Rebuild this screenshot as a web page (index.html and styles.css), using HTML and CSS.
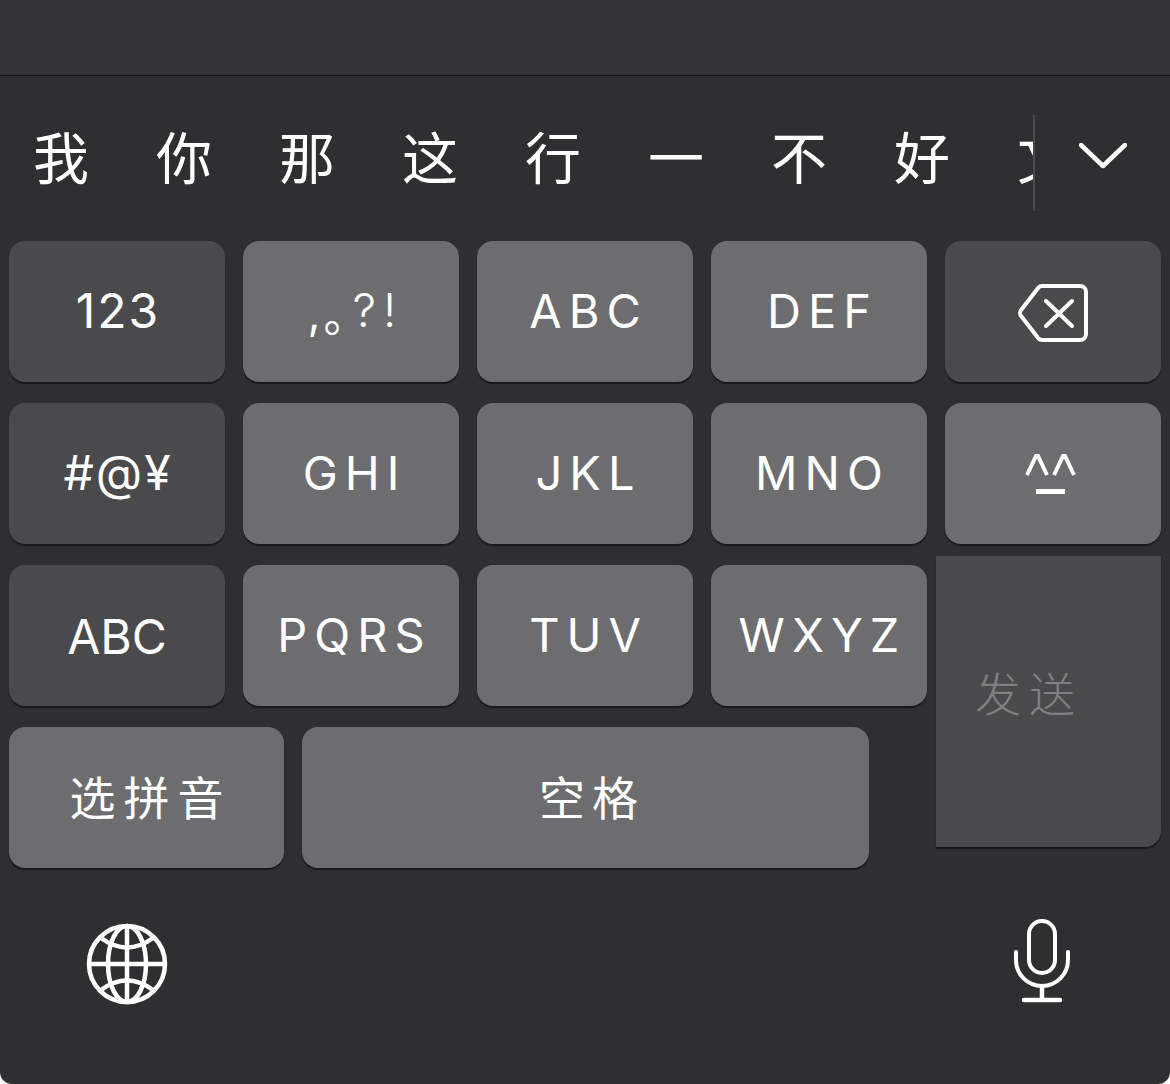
FILE: index.html
```html
<!DOCTYPE html>
<html lang="zh-CN">
<head>
    <meta charset="UTF-8">
    <meta name="viewport" content="width=device-width, initial-scale=1.0">
    <title>键盘</title>
    <link rel="stylesheet" href="styles.css">
</head>
<body>
    <div class="keyboard">
        <div class="top-bar"></div>

        <div class="candidates">
            <div class="candidate-list">
                <span>我</span><span>你</span><span>那</span><span>这</span><span>行</span><span>一</span><span>不</span><span>好</span><span>文</span>
            </div>
            <div class="candidate-more">
                <svg width="48" height="26" viewBox="0 0 48 26"><polyline points="2,2 24,23 46,2" fill="none" stroke="#fff" stroke-width="4.500" stroke-linecap="round" stroke-linejoin="round"/></svg>
            </div>
        </div>

        <div class="keys">
            <div class="key key-dark key-num">123</div>
            <div class="key key-punct">,<span class="dot">。</span><span class="marks">?!</span></div>
            <div class="key">ABC</div>
            <div class="key">DEF</div>
            <div class="key key-dark">
                <svg class="backspace" width="70" height="58" viewBox="0 0 70 58">
                    <path d="M24 2H62a6 6 0 0 1 6 6V50a6 6 0 0 1-6 6H24a5 5 0 0 1-3.500-1.500L3.500 32.500a5 5 0 0 1 0-7L20.500 3.500A5 5 0 0 1 24 2Z" fill="none" stroke="#fff" stroke-width="4" stroke-linejoin="round"/>
                    <path d="M28 17L54 42M54 17L28 42" fill="none" stroke="#fff" stroke-width="4" stroke-linecap="round"/>
                </svg>
            </div>

            <div class="key key-dark key-num">#@¥</div>
            <div class="key">GHI</div>
            <div class="key">JKL</div>
            <div class="key">MNO</div>
            <div class="key">
                <svg class="face" width="52" height="42" viewBox="0 0 52 42">
                    <path d="M2 21L11 2H13L22 21M29 21L38 2H40L49 21" fill="none" stroke="#fff" stroke-width="4"/>
                    <rect x="11" y="35" width="29" height="5" fill="#fff"/>
                </svg>
            </div>

            <div class="key key-dark key-abc">ABC</div>
            <div class="key">PQRS</div>
            <div class="key">TUV</div>
            <div class="key">WXYZ</div>
            <div class="key key-send">发送</div>

            <div class="last-row">
                <div class="key key-cn key-pinyin">选拼音</div>
                <div class="key key-cn key-space">空格</div>
            </div>
        </div>

        <div class="bottom-row">
            <svg class="globe" width="82" height="82" viewBox="0 0 82 82" fill="none" stroke="#fff" stroke-width="4.500">
                <circle cx="41" cy="41" r="38"/>
                <ellipse cx="41" cy="41" rx="19" ry="38"/>
                <path d="M41 3V79M3 41H79"/>
                <path d="M15 15Q41 34 67 15M15 67Q41 48 67 67"/>
            </svg>
            <svg class="mic" width="58" height="85" viewBox="0 0 58 85" fill="none" stroke="#fff" stroke-width="4" stroke-linecap="round">
                <rect x="16" y="3" width="26" height="52" rx="13"/>
                <path d="M3 34V42a26 26 0 0 0 52 0V34"/>
                <path d="M29 68V82M11 82H47" stroke-width="4.500"/>
            </svg>
        </div>
    </div>
</body>
</html>
```

FILE: styles.css
```css
*{
    margin: 0;
    padding: 0;
    box-sizing: border-box;
}
body{
    background-color: #fff;
    font-family: "Inter", "Noto Sans CJK SC", sans-serif;
    color: #fff;
}
.keyboard{
    width: 1170px;
    height: 1084px;
    background-color: #2f2f31;
    border-radius: 0 0 12px 12px;
    overflow: hidden;
}
.top-bar{
    height: 76px;
    background-color: #333335;
    border-bottom: 1px solid #141416;
}
/* Candidate bar */
.candidates{
    height: 165px;
    display: flex;
    padding-top: 39px;
}
.candidate-list{
    width: 1035px;
    height: 96px;
    padding: 2px 0 0 33px;
    display: flex;
    gap: 67px;
    align-items: flex-start;
    overflow: hidden;
    border-right: 2px solid #4a4a4c;
    font-family: "Noto Sans CJK SC", sans-serif;
    font-size: 56px;
    line-height: 76px;
}
.candidate-list span{
    flex: none;
    width: 56px;
}
.candidate-more{
    width: 135px;
    height: 96px;
    padding: 28px 0 0 44px;
}
/* Keys */
.keys{
    display: grid;
    grid-template-columns: repeat(5, 216px);
    grid-auto-rows: 141px;
    column-gap: 18px;
    row-gap: 21px;
    padding-left: 9px;
}
.key{
    display: flex;
    justify-content: center;
    align-items: center;
    padding-bottom: 2px;
    background-color: #6d6d6f;
    border-radius: 16px;
    box-shadow: 0 2px 1px #19191b;
    font-size: 47px;
    letter-spacing: 7px;
    text-indent: 7px;
}
.key-dark{
    background-color: #4a4a4c;
}
.key-num{
    font-size: 48px;
    letter-spacing: 2px;
    text-indent: 2px;
}
.key-abc{
    font-size: 48px;
    letter-spacing: 0;
    text-indent: 0;
    padding: 2px 0 0;
}
.key-punct{
    padding-top: 4px;
    font-size: 44px;
    letter-spacing: 1px;
    text-indent: 2px;
}
.key-punct .dot{
    letter-spacing: -21px;
    margin-right: 4px;
}
.key-punct .marks{
    position: relative;
    top: -3px;
    font-size: 47px;
    font-weight: 300;
    letter-spacing: 7px;
    margin-right: -7px;
}
.face{
    margin: 4px 4px 0 0;
}
.backspace{
    margin-top: 5px;
}
.key-send{
    grid-column: 5;
    grid-row: 3 / span 2;
    margin: -9px 0 21px -9px;
    padding: 0 39px 21px 0;
    border-radius: 0 0 16px 0;
    background-color: #4a4a4c;
    color: #808082;
    font-family: "Noto Sans CJK SC", sans-serif;
    font-size: 46px;
    font-weight: 300;
    letter-spacing: 8px;
    text-indent: 0;
}
.last-row{
    grid-column: 1 / span 4;
    grid-row: 4;
    display: flex;
    gap: 18px;
}
.key-cn{
    font-family: "Noto Sans CJK SC", sans-serif;
    font-size: 46px;
    letter-spacing: 8px;
    text-indent: 8px;
    padding-bottom: 5px;
}
.key-pinyin{
    width: 275px;
}
.key-space{
    width: 567px;
    letter-spacing: 7px;
    text-indent: 13px;
}
/* Bottom icons */
.bottom-row{
    display: flex;
    justify-content: space-between;
    padding: 50px 99px 0 86px;
}
.globe{
    margin-top: 5px;
}
```
